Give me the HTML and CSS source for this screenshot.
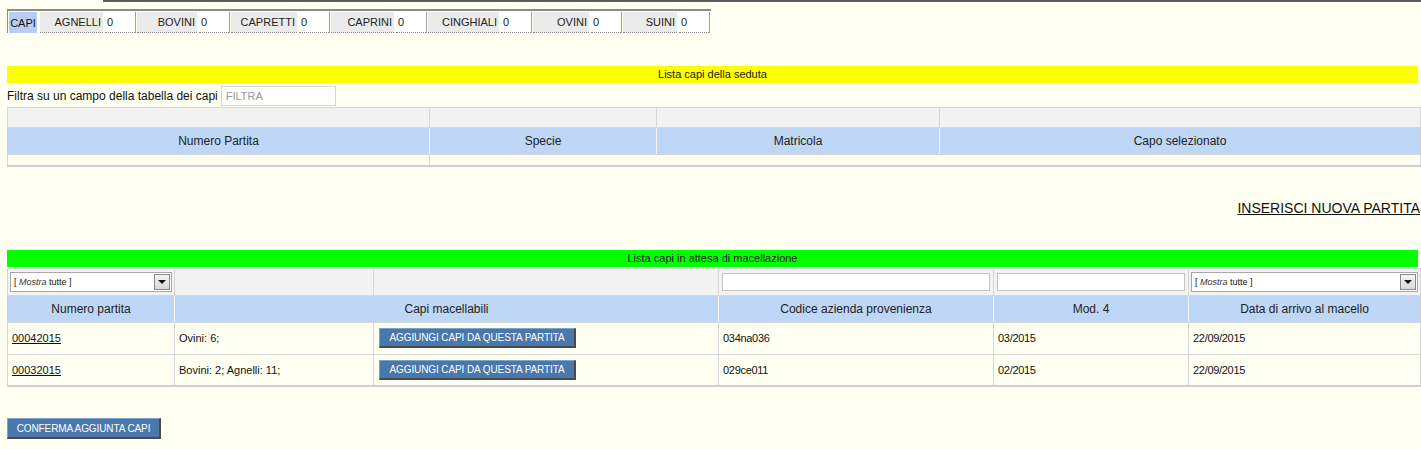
FILE: index.html
```html
<!DOCTYPE html>
<html>
<head>
<meta charset="utf-8">
<title>Capi</title>
<link rel="stylesheet" href="styles.css">
</head>
<body>
<div class="topline"></div>
<div class="tabs">
  <div class="tab tab-active">CAPI</div>
  <div class="tab"><span class="tab-label w63">AGNELLI</span><span class="tab-val">0</span></div>
  <div class="tab"><span class="tab-label w60">BOVINI</span><span class="tab-val">0</span></div>
  <div class="tab"><span class="tab-label w66">CAPRETTI</span><span class="tab-val">0</span></div>
  <div class="tab"><span class="tab-label w63">CAPRINI</span><span class="tab-val">0</span></div>
  <div class="tab"><span class="tab-label w71">CINGHIALI</span><span class="tab-val">0</span></div>
  <div class="tab"><span class="tab-label w56">OVINI</span><span class="tab-val">0</span></div>
  <div class="tab"><span class="tab-label w54">SUINI</span><span class="tab-val">0</span></div>
</div>

<div class="bar bar-yellow">Lista capi della seduta</div>
<div class="filter-row">
  <span class="filter-label">Filtra su un campo della tabella dei capi</span>
  <input class="filter-input" type="text" placeholder="FILTRA">
</div>
<table class="grid grid1">
  <colgroup><col class="c1a"><col class="c1b"><col class="c1c"><col class="c1d"></colgroup>
  <tr class="row-filter r20"><td></td><td></td><td></td><td></td></tr>
  <tr class="row-head"><th>Numero Partita</th><th>Specie</th><th>Matricola</th><th>Capo selezionato</th></tr>
  <tr class="row-empty"><td></td><td colspan="3"></td></tr>
</table>

<div class="new-link-row"><a class="new-link" href="#">INSERISCI NUOVA PARTITA</a></div>

<div class="bar bar-green">Lista capi in attesa di macellazione</div>
<table class="grid grid2">
  <colgroup><col class="c2a"><col class="c2b"><col class="c2c"><col class="c2d"><col class="c2e"><col class="c2f"></colgroup>
  <tr class="row-filter">
    <td><div class="select"><span class="select-text">[ <i>Mostra</i> tutte ]</span><span class="select-btn"><span class="arrow"></span></span></div></td>
    <td></td>
    <td></td>
    <td><div class="text-box"></div></td>
    <td><div class="text-box"></div></td>
    <td><div class="select"><span class="select-text">[ <i>Mostra</i> tutte ]</span><span class="select-btn"><span class="arrow"></span></span></div></td>
  </tr>
  <tr class="row-head"><th>Numero partita</th><th colspan="2">Capi macellabili</th><th>Codice azienda provenienza</th><th>Mod. 4</th><th>Data di arrivo al macello</th></tr>
  <tr class="row-data">
    <td><a href="#">00042015</a></td>
    <td>Ovini: 6;</td>
    <td><button class="btn">AGGIUNGI CAPI DA QUESTA PARTITA</button></td>
    <td class="narrow">034na036</td>
    <td class="narrow">03/2015</td>
    <td class="narrow">22/09/2015</td>
  </tr>
  <tr class="row-data">
    <td><a href="#">00032015</a></td>
    <td>Bovini: 2; Agnelli: 11;</td>
    <td><button class="btn">AGGIUNGI CAPI DA QUESTA PARTITA</button></td>
    <td class="narrow">029ce011</td>
    <td class="narrow">02/2015</td>
    <td class="narrow">22/09/2015</td>
  </tr>
</table>

<div class="confirm-row"><button class="btn btn-confirm">CONFERMA AGGIUNTA CAPI</button></div>
</body>
</html>
```

FILE: styles.css
```css
* { box-sizing: border-box; }
html, body { margin: 0; padding: 0; }
body {
  background: #fffff2;
  font-family: "Liberation Sans", Arial, sans-serif;
  font-size: 12px;
  color: #222;
  width: 1421px;
  height: 449px;
  overflow: hidden;
}

.topline {
  margin-left: 103px;
  height: 2px;
  background: #5c5c5c;
}

.tabs {
  display: inline-flex;
  margin: 7px 0 0 7px;
  border-top: 2px solid #8c8c84;
  border-left: 1px solid #8c8c84;
  padding: 1px 0 0 1px;
  height: 24px;
}
.tab {
  display: flex;
  height: 21px;
  border-right: 1px solid #a0a0a0;
  margin-right: 1px;
}
.tab-active {
  background: #b7cdf4;
  width: 28px;
  justify-content: center;
  align-items: center;
  font-size: 11px;
  color: #111;
  border-right: none;
  margin-right: 3px;
}
.tab-label {
  background: #ebebeb;
  border-bottom: 1px dotted #888;
  text-align: right;
  padding-right: 2px;
  line-height: 21px;
  font-size: 11px;
  color: #222;
}
.tab-val {
  background: #fff;
  border-bottom: 1px dotted #888;
  width: 30px;
  margin-left: 2px;
  padding-left: 2px;
  line-height: 21px;
  font-size: 11px;
}
.w63 { width: 63px; }
.w60 { width: 60px; }
.w66 { width: 66px; }
.w71 { width: 71px; }
.w56 { width: 56px; }
.w54 { width: 54px; }

.bar {
  margin: 0 3px 0 7px;
  height: 17px;
  line-height: 17px;
  text-align: center;
  font-size: 11px;
  color: #222;
}
.bar-yellow { background: #ffff00; margin-top: 33px; }
.bar-green { background: #00ff00; margin-top: 34px; margin-bottom: 1px; }

.filter-row {
  display: flex;
  align-items: center;
  height: 22px;
  padding-left: 7px;
  margin-top: 2px;
}
.filter-label { font-size: 12px; color: #111; margin-right: 3px; }
.filter-input {
  width: 115px;
  height: 20px;
  border: 1px solid #d6d6d6;
  background: #fff;
  font-family: "Liberation Sans", Arial, sans-serif;
  font-size: 11px;
  padding: 0 4px;
  color: #888;
}
.filter-input::placeholder { color: #999; }

.grid {
  margin-left: 7px;
  border-collapse: collapse;
  table-layout: fixed;
  width: 1413px;
  border: 1px solid #cfcfcf;
  border-bottom: 2px solid #cfcfcf;
}
.grid td, .grid th {
  border: 1px solid #d6d6d6;
  padding: 0;
}
.grid th {
  font-weight: normal;
  font-size: 12px;
  color: #222;
  text-align: center;
}
.row-filter td { background: #f2f2f2; }
.r20 td { height: 20px; }
.row-head th { background: #bed7f6; height: 27px; border-color: #f4f4f4 #f4f4f4 #d6d6d6 #f4f4f4; }
.grid .row-head th:first-child { border-left-color: #cfcfcf; }
.grid .row-head th:last-child { border-right-color: #cfcfcf; }
.row-empty td { height: 11px; }

.c1a { width: 422px; }
.c1b { width: 227px; }
.c1c { width: 283px; }
.c1d { width: 481px; }

.c2a { width: 167px; }
.c2b { width: 199px; }
.c2c { width: 345px; }
.c2d { width: 275px; }
.c2e { width: 195px; }
.c2f { width: 232px; }

.new-link-row {
  display: flex;
  justify-content: flex-end;
  padding-right: 1px;
  margin-top: 33px;
}
.new-link {
  color: #111;
  font-size: 14px;
}

.grid2 .row-filter td { height: 27px; padding: 0 2px; }
.select {
  display: flex;
  align-items: center;
  height: 20px;
  background: #fff;
  border: 1px solid #a8a8a8;
  padding: 1px;
}
.select-text {
  flex: 1;
  font-size: 9px;
  padding-left: 2px;
  color: #111;
}
.select-text i { color: #333; }
.select-btn {
  width: 16px;
  height: 16px;
  border: 1px solid #8a8a8a;
  background: linear-gradient(#f4f4f4, #d8d8d8);
  display: flex;
  align-items: center;
  justify-content: center;
}
.arrow {
  width: 0;
  height: 0;
  border-left: 4px solid transparent;
  border-right: 4px solid transparent;
  border-top: 4px solid #111;
}
.text-box {
  height: 18px;
  background: #fff;
  border: 1px solid #c4c4c4;
  margin: 0 1px;
}

.row-data td {
  height: 32px;
  padding: 0 4px;
  font-size: 11px;
  color: #111;
}
.row-data td.narrow { font-size: 11px; letter-spacing: -0.3px; }
.row-data a { color: #111; font-size: 11px; }

.btn {
  font-family: "Liberation Sans", Arial, sans-serif;
  background: #4878ac;
  color: #fff;
  font-size: 10px;
  letter-spacing: -0.1px;
  height: 20px;
  width: 197px;
  padding: 0;
  border-top: 1px solid #7fa2c9;
  border-left: 1px solid #7fa2c9;
  border-right: 2px solid #4a4a4a;
  border-bottom: 2px solid #4a4a4a;
  margin-left: 1px;
}
.confirm-row { padding: 31px 0 0 7px; }
.btn-confirm { width: 154px; height: 21px; margin-left: 0; }
```
